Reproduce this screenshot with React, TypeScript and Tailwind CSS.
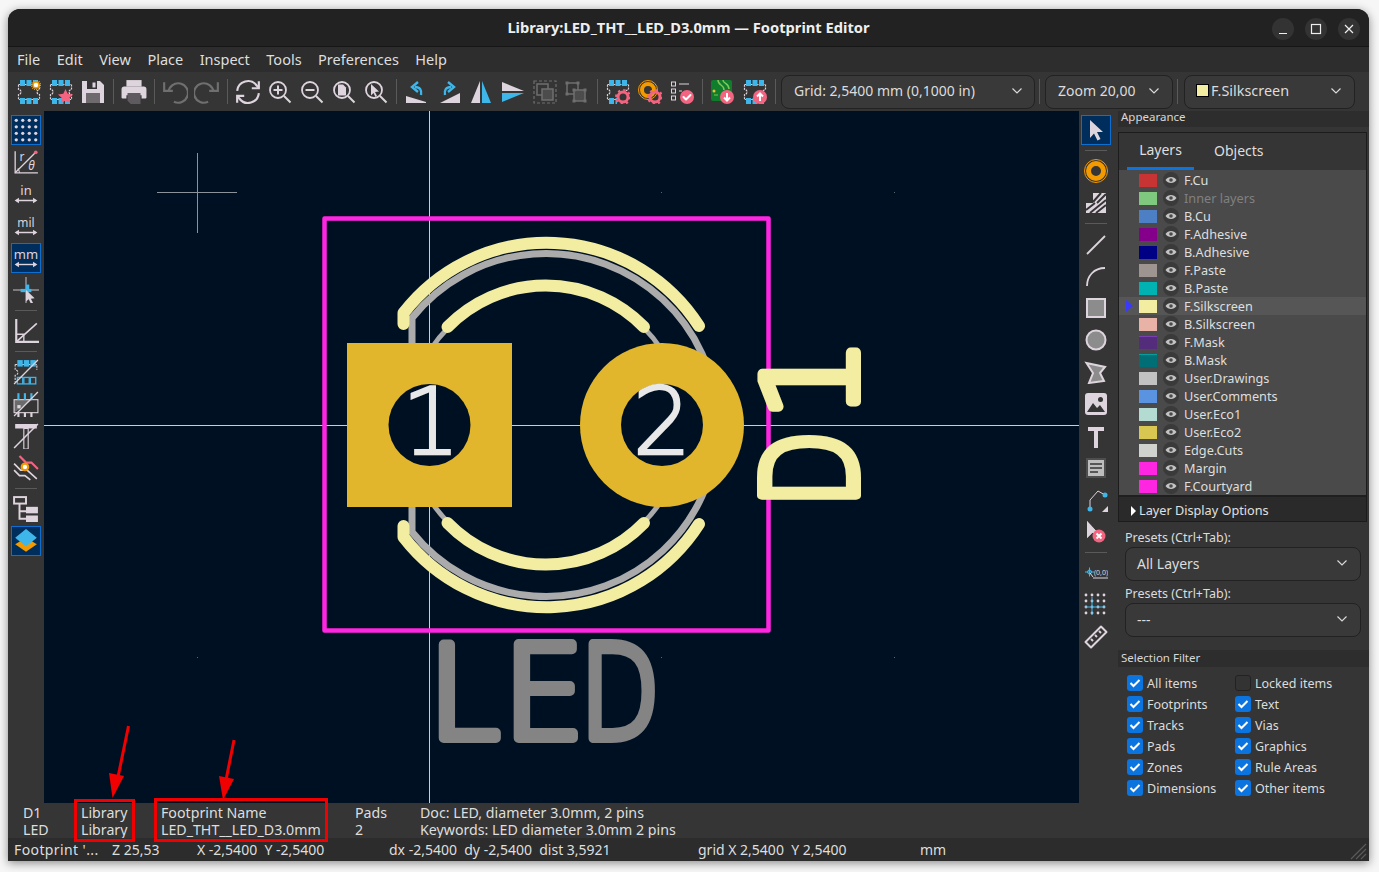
import type { ReactNode } from "react";

const L = "#ded4dd";
const B = "#3fb6ea";
const R = "#f2647f";
const O = "#f39a00";
const DIM = "#6f6f6f";

function Ic({ children, size = 24 }: { children: ReactNode; size?: number }) {
  return (
    <svg width={size} height={size} viewBox="0 0 24 24" fill="none" className="block">
      {children}
    </svg>
  );
}

function Btn({ children, active }: { children: ReactNode; active?: boolean }) {
  return (
    <div className="w-8 h-8 flex items-center justify-center shrink-0">
      <div
        className={`w-[30px] h-[30px] flex items-center justify-center ${
          active ? "bg-[#002e5c] border border-[#0f6fd0]" : ""
        }`}
      >
        {children}
      </div>
    </div>
  );
}

const HSep = () => <div className="w-[9px] h-8 flex items-center justify-center shrink-0"><div className="w-px h-[25px] bg-[#5a5a5a]" /></div>;
const VSep = () => <div className="h-[9px] w-8 flex items-center justify-center shrink-0"><div className="h-px w-[22px] bg-[#5a5a5a]" /></div>;

const FpBase = () => (
  <>
    <path d="M1.5 4.5h21v5a2.5 2.5 0 0 0 0 5v5h-21v-5a2.5 2.5 0 0 0 0-5z" stroke={L} strokeWidth="1.2" strokeDasharray="2 1" />
    {[3, 9.5, 16].map((x) => (
      <g key={x}>
        <rect x={x} y="0" width="5" height="6" fill={B} />
        <rect x={x} y="18" width="5" height="6" fill={B} />
      </g>
    ))}
  </>
);

const Gear = ({ cx = 17, cy = 17 }: { cx?: number; cy?: number }) => (
  <g>
    <circle cx={cx} cy={cy} r="5" fill="none" stroke={R} strokeWidth="3" />
    <circle cx={cx} cy={cy} r="7" fill="none" stroke={R} strokeWidth="2" strokeDasharray="2.4 3.1" />
  </g>
);

const Badge = ({ d }: { d: string }) => (
  <g>
    <circle cx="17" cy="17" r="7" fill={R} />
    <path d={d} stroke="#fff" strokeWidth="2" strokeLinecap="round" strokeLinejoin="round" />
  </g>
);

const Lens = ({ children }: { children?: ReactNode }) => (
  <>
    <circle cx="10" cy="10" r="8" stroke={L} strokeWidth="1.8" />
    <path d="M16 16l6.5 6.5" stroke={L} strokeWidth="2" />
    {children}
  </>
);

const Arrow = ({ color = L }: { color?: string }) => (
  <path d="M6 2l13 12h-6l3.5 7-3 1.5-3.5-7L6 20z" fill={color} />
);

const Slash = () => <path d="M1 23L23 1" stroke={L} strokeWidth="1.2" />;

const DoubleArrow = () => (
  <g stroke={L} strokeWidth="1.3" fill={L}>
    <path d="M3 18h18" />
    <path d="M1.5 18l4-2.5v5zM22.5 18l-4-2.5v5z" stroke="none" />
  </g>
);

const UnitIcon = ({ label }: { label: string }) => (
  <Ic size={26}>
    <text x="12" y="13" textAnchor="middle" fontSize={label === "mil" ? 11 : 12} fontFamily="'Noto Sans', sans-serif" fill={L}>
      {label}
    </text>
    <DoubleArrow />
  </Ic>
);

const topIcons: (ReactNode | "sep")[] = [
  <Ic><FpBase /><circle cx="19" cy="5" r="3" fill="#fff" stroke={O} strokeWidth="1.5" /><circle cx="19" cy="5" r="4.6" stroke={O} strokeWidth="1.2" strokeDasharray="1 1" /></Ic>,
  <Ic><FpBase /><path d="M16.5 9l2.2 4.8 5.3.6-3.9 3.6 1 5.2-4.6-2.6-4.6 2.6 1-5.2-3.9-3.6 5.3-.6z" fill={R} /></Ic>,
  <Ic><path d="M1 1h18l4 4v18H1z" fill={L} /><rect x="6" y="1" width="10" height="8" fill="#353535" /><rect x="11.5" y="2.5" width="3" height="5" fill={L} /><rect x="5" y="13" width="14" height="10" fill="#6e6a6e" /></Ic>,
  "sep",
  <Ic size={26}><rect x="5" y="1" width="14" height="6" fill={L} /><path d="M3 7h18a2.5 2.5 0 0 1 2.5 2.5V17a1 1 0 0 1-1 1H19v-3H5v3H1.500a1 1 0 0 1-1-1V9.500A2.500 2.500 0 0 1 3 7z" fill={L} /><path d="M6 13h12v10H9l-3-3z" fill="#5f5a5f" /></Ic>,
  "sep",
  <Ic size={26}><path d="M6 12A9 9 0 1 1 11 21" stroke={DIM} strokeWidth="2" /><path d="M2 3v8h8" stroke={DIM} strokeWidth="2" /></Ic>,
  <Ic size={26}><path d="M18 12A9 9 0 1 0 13 21" stroke={DIM} strokeWidth="2" /><path d="M22 3v8h-8" stroke={DIM} strokeWidth="2" /></Ic>,
  "sep",
  <Ic size={26}><path d="M2 11a10 10 0 0 1 18-5l2 2" stroke={L} strokeWidth="2" /><path d="M22 2v6.500h-6.500" stroke={L} strokeWidth="2" /><path d="M22 13a10 10 0 0 1-18 5l-2-2" stroke={L} strokeWidth="2" /><path d="M2 22v-6.500h6.500" stroke={L} strokeWidth="2" /></Ic>,
  <Ic><Lens><path d="M10 5.500v9M5.500 10h9" stroke={L} strokeWidth="2" /></Lens></Ic>,
  <Ic><Lens><path d="M5.500 10h9" stroke={L} strokeWidth="2" /></Lens></Ic>,
  <Ic><Lens><path d="M6 4.500h5l3 3v8H6z" fill={L} /></Lens></Ic>,
  <Ic><Lens><path d="M7 4l8 7.500-4 .5 2 4-1.500 1-2-4L7 15.500z" fill={L} /></Lens></Ic>,
  "sep",
  <Ic><path d="M1 16l20 6v1H1z" fill={L} /><path d="M16 15c1-5-1-8-6-8" stroke={B} strokeWidth="2.400" /><path d="M13 2L7 7l6 5" stroke={B} strokeWidth="2.400" /></Ic>,
  <Ic><path d="M23 13v10H3z" fill={L} /><path d="M8 15c-1-5 1-8 6-8" stroke={B} strokeWidth="2.400" /><path d="M11 2l6 5-6 5" stroke={B} strokeWidth="2.400" /></Ic>,
  <Ic><path d="M11 1v22H2z" fill={L} /><path d="M13 1v22h9z" fill={B} /></Ic>,
  <Ic><path d="M1 2l22 9H1z" fill={L} /><path d="M1 13h22L1 22z" fill={B} /></Ic>,
  <Ic><rect x="1" y="1" width="22" height="22" stroke={DIM} strokeWidth="1.200" strokeDasharray="3 2" /><rect x="4" y="4" width="11" height="11" stroke={DIM} strokeWidth="1.500" /><rect x="9" y="9" width="11" height="11" fill="#4c4c4c" stroke={DIM} strokeWidth="1.500" /></Ic>,
  <Ic><rect x="2" y="3" width="11" height="11" stroke={DIM} strokeWidth="1.500" /><rect x="9" y="10" width="11" height="11" fill="#4c4c4c" stroke={DIM} strokeWidth="1.500" />{[[2, 3], [13, 3], [2, 14], [9, 10], [20, 10], [9, 21], [20, 21]].map(([x, y]) => <rect key={`${x}-${y}`} x={x - 1.5} y={y - 1.5} width="3" height="3" fill={DIM} />)}</Ic>,
  "sep",
  <Ic><FpBase /><rect x="11" y="11" width="13" height="13" fill="#353535" /><Gear /></Ic>,
  <Ic><circle cx="10" cy="10" r="9.500" stroke={O} strokeWidth="1" /><circle cx="10" cy="10" r="6" stroke={O} strokeWidth="4" /><Gear /></Ic>,
  <Ic>{[2, 9, 16].map((y) => <rect key={y} x="1.500" y={y} width="4" height="4" stroke={L} strokeWidth="1" />)}<path d="M9 4h10M9 11h3" stroke={L} strokeWidth="1.200" /><Badge d="M13.500 17l2.500 2.500 4.500-4.500" /></Ic>,
  "sep",
  <Ic><rect x="0" y="0" width="21" height="21" rx="2" fill="#0f7d2c" /><path d="M7 0c0 6 6 4 6 10M12 0c0 4 6 3 6 9" stroke="#7fc65a" strokeWidth="1.500" /><circle cx="3" cy="11" r="1.500" fill="#e8c040" /><path d="M3 15h4" stroke="#7fc65a" /><circle cx="16" cy="17" r="7" fill={R} /><path d="M16 13v7M13 17.500l3 3 3-3" stroke="#fff" strokeWidth="2" /></Ic>,
  <Ic><FpBase /><circle cx="17" cy="17" r="7" fill={R} /><path d="M17 21v-7M14 16.500l3-3 3 3" stroke="#fff" strokeWidth="2" /></Ic>,
  "sep",
];

const Grid4 = () => (
  <Ic size={26}>
    {[3, 9, 15, 21].flatMap((x) => [3, 9, 15, 21].map((y) => <circle key={`${x}-${y}`} cx={x} cy={y} r="1.500" fill={L} />))}
  </Ic>
);

const leftIcons: (ReactNode | "sep")[] = [
  <Btn active><Grid4 /></Btn>,
  <Btn><Ic size={26}><path d="M2 2v20h21" stroke={L} strokeWidth="1.200" /><path d="M2 22L21 3" stroke={L} strokeWidth="1.200" /><circle cx="21" cy="3" r="1.700" fill={R} /><path d="M6 22a7 7 0 0 0-1.500-4" stroke={L} /><text x="6" y="11" fontSize="11" fontFamily="'Noto Sans', sans-serif" fill={L}>r</text><text x="14" y="19" fontSize="11" fontStyle="italic" fontFamily="'Noto Sans', sans-serif" fill={L}>θ</text></Ic></Btn>,
  <Btn><UnitIcon label="in" /></Btn>,
  <Btn><UnitIcon label="mil" /></Btn>,
  <Btn active><UnitIcon label="mm" /></Btn>,
  <Btn><Ic size={26}><path d="M12 0v24M0 12h24" stroke={L} strokeWidth="0.800" /><path d="M7 11h10v3H7z" fill={B} /><path d="M12 7h3v7h-3z" fill={B} /><path d="M12 12l8 7.500-3.500.5 2 4-2 .5-2-4-2.500 2z" fill={L} /></Ic></Btn>,
  "sep",
  <Btn><Ic size={26}><path d="M3 1v21h21" stroke={L} strokeWidth="2" /><path d="M3 22L22 5" stroke={L} strokeWidth="1.500" /><path d="M3 15h7v7" stroke={L} strokeWidth="1.200" /></Ic></Btn>,
  "sep",
  <Btn><Ic size={26}><path d="M2 5h20v5M2 5v5a2 2 0 0 1 0 5v6" stroke={L} strokeWidth="1" strokeDasharray="2 1" />{[4, 10, 16].map((x) => <g key={x}><rect x={x} y="1" width="5" height="6" fill={B} /><rect x={x} y="17" width="5" height="6" stroke={B} strokeWidth="1.200" /></g>)}<Slash /></Ic></Btn>,
  <Btn><Ic size={26}><path d="M1 8h17L1 20z" fill="#6b6b6b" /><rect x="4" y="13" width="3" height="3" fill={L} /><rect x="1" y="8" width="22" height="12" stroke={L} strokeWidth="1" />{[5, 11, 17].map((x) => <g key={x}><path d={`M${x} 2v6`} stroke={B} strokeWidth="2" /><path d={`M${x} 20v4`} stroke={L} strokeWidth="2" /></g>)}<Slash /></Ic></Btn>,
  <Btn><Ic size={26}><path d="M2 1h20v4H14v19h-4V5H2z" fill={L} /><path d="M10 5h4v19h-4z" fill="#353535" stroke={L} strokeWidth="1" /><path d="M1 23L23 1" stroke={L} strokeWidth="1.400" /></Ic></Btn>,
  <Btn><Ic size={26}><path d="M6 1l6 6h5l6 6" stroke={R} strokeWidth="2" /><path d="M1 8l6 6h6l9 8" stroke={L} strokeWidth="1.500" /><path d="M1 14l5 5h5l5 4" stroke={L} strokeWidth="1.500" /><circle cx="11" cy="11" r="3" fill="#fff" stroke={O} strokeWidth="2" /></Ic></Btn>,
  "sep",
  <Btn><Ic size={26}><rect x="1" y="1" width="11" height="6" fill="none" stroke={L} strokeWidth="1.800" /><path d="M6 7v14h6M6 14h6" stroke={L} strokeWidth="1.800" /><rect x="12" y="10" width="11" height="6" fill={L} /><rect x="12" y="18" width="11" height="6" fill={L} /></Ic></Btn>,
  <Btn active><Ic size={26}><path d="M12 9l10 6-10 7-10-7z" fill={O} /><path d="M12 1l10 8-10 8L2 9z" fill={B} /></Ic></Btn>,
];

const rightIcons: (ReactNode | "sep")[] = [
  <Btn active><Ic><Arrow /></Ic></Btn>,
  "sep",
  <Btn><Ic><circle cx="12" cy="12" r="11.500" stroke={O} strokeWidth="1" /><circle cx="12" cy="12" r="7.500" stroke={O} strokeWidth="5" /></Ic></Btn>,
  <Btn><Ic><path d="M2 12h7V2h13v20H2z" fill={L} /><path d="M2 19l9-7M6 22l16-13M12 22L22 14M9 11l8-9M13 12l9-9" stroke="#353535" strokeWidth="2" /></Ic></Btn>,
  "sep",
  <Btn><Ic><path d="M3 22L21 4" stroke={L} strokeWidth="1.800" /></Ic></Btn>,
  <Btn><Ic><path d="M3 22C3 12 10 4 21 4" stroke={L} strokeWidth="1.800" /></Ic></Btn>,
  <Btn><Ic><rect x="3" y="3" width="18" height="18" fill="#8c8c8c" stroke={L} strokeWidth="2" /></Ic></Btn>,
  <Btn><Ic><circle cx="12" cy="12" r="9.500" fill="#8c8c8c" stroke={L} strokeWidth="2" /></Ic></Btn>,
  <Btn><Ic><path d="M2.500 3L21 7l-5 6 4 8-15 2 4-10z" fill="#8c8c8c" stroke={L} strokeWidth="2" /></Ic></Btn>,
  <Btn><Ic><rect x="1" y="1" width="22" height="22" rx="3" fill={L} /><circle cx="16.500" cy="7.500" r="2.500" fill="#353535" /><path d="M3 20l6-9 4 5 3-3 5 7z" fill="#353535" /></Ic></Btn>,
  <Btn><Ic><path d="M4 3h16v4h-6v18h-4V7H4z" fill={L} /></Ic></Btn>,
  <Btn><Ic><rect x="2" y="2" width="20" height="20" fill="#4e4e4e" /><rect x="4" y="4" width="16" height="16" fill="#bdbdbd" /><path d="M6 8h12M6 12h12M6 16h8" stroke="#353535" strokeWidth="1.500" /></Ic></Btn>,
  <Btn><Ic><path d="M21 7L14 3 6 12v9" stroke={L} strokeWidth="1" /><circle cx="21" cy="7" r="2.500" fill={B} /><circle cx="6" cy="21" r="2.500" fill={B} /><path d="M24 24v-6l-6 6z" fill={L} /></Ic></Btn>,
  <Btn><Ic><path d="M3 1l11 12H8l-5 5z" fill={L} /><path d="M3 1v17l5-5 6 0z" fill={L} /><circle cx="15" cy="16" r="6.500" fill={R} /><path d="M12.500 13.500l5 5m0-5l-5 5" stroke="#fff" strokeWidth="2" /></Ic></Btn>,
  "sep",
  <Btn><Ic><path d="M1 11h9M5.500 6.500v9" stroke={B} strokeWidth="1" /><circle cx="5.500" cy="11" r="2" stroke={B} strokeWidth="1" /><path d="M6 12l3 4" stroke={L} strokeWidth="1" /><text x="10" y="14" fontSize="7" fontFamily="'Noto Sans', sans-serif" fill={L}>(0,0)</text><path d="M9 17h15" stroke={L} strokeWidth="1" /></Ic></Btn>,
  <Btn><Ic>{[2, 8, 14, 20].flatMap((x) => [2, 8, 14, 20].map((y) => <circle key={`${x}-${y}`} cx={x} cy={y} r="1.400" fill={L} />))}<path d="M1 14h20M8 4v18" stroke={B} strokeWidth="1" /></Ic></Btn>,
  <Btn><Ic><path d="M1.500 17L17 1.500l5.500 5.500L7 22.500z" stroke={L} strokeWidth="2" strokeLinejoin="round" /><path d="M7 14l2 2M11 10l2 2M15 6l2 2" stroke={L} strokeWidth="2" /></Ic></Btn>,
];

const layers = [
  ["F.Cu", "bg-[#c83434]"],
  ["Inner layers", "bg-[#7fc97f]"],
  ["B.Cu", "bg-[#4d7fc4]"],
  ["F.Adhesive", "bg-[#84008a]"],
  ["B.Adhesive", "bg-[#000084]"],
  ["F.Paste", "bg-[#9f9590]"],
  ["B.Paste", "bg-[#00b2b2]"],
  ["F.Silkscreen", "bg-[#f2eda1]"],
  ["B.Silkscreen", "bg-[#e8b2a7]"],
  ["F.Mask", "bg-[#532c7c] border-t border-[#7a3fb0]"],
  ["B.Mask", "bg-[#006f75] border-t border-[#00a0a0]"],
  ["User.Drawings", "bg-[#c2c2c2]"],
  ["User.Comments", "bg-[#5a94e0]"],
  ["User.Eco1", "bg-[#b4dbd2]"],
  ["User.Eco2", "bg-[#d8c852]"],
  ["Edge.Cuts", "bg-[#d0d2cd]"],
  ["Margin", "bg-[#ff26e2]"],
  ["F.Courtyard", "bg-[#ff26e2]"],
];

const filters = [
  ["All items", "Locked items"],
  ["Footprints", "Text"],
  ["Tracks", "Vias"],
  ["Pads", "Graphics"],
  ["Zones", "Rule Areas"],
  ["Dimensions", "Other items"],
];

const Chevron = () => (
  <svg width="12" height="8" viewBox="0 0 12 8" fill="none">
    <path d="M1.500 1.500L6 6l4.500-4.500" stroke="#d8d8d8" strokeWidth="1.200" />
  </svg>
);

function Combo({ className, children }: { className: string; children: ReactNode }) {
  return (
    <div className={`flex items-center justify-between rounded-lg border border-[#222] bg-[#393939] pb-[2px] text-[14px] text-[#dcdcdc] ${className}`}>
      {children}
      <Chevron />
    </div>
  );
}

function Check({ label, checked }: { label: string; checked: boolean }) {
  return (
    <div className="flex items-center gap-1 h-[21px]">
      <div className={`w-4 h-4 rounded-[3px] flex items-center justify-center ${checked ? "bg-[#0c74df]" : "bg-[#333] border border-[#222]"}`}>
        {checked && (
          <svg width="12" height="10" viewBox="0 0 12 10" fill="none">
            <path d="M1.500 5l3 3 6-6" stroke="#fff" strokeWidth="2" />
          </svg>
        )}
      </div>
      <span className="text-[12.5px] pt-[4px] text-[#dcdcdc]">{label}</span>
    </div>
  );
}

function Eye() {
  return (
    <div className="w-4 h-4 rounded-full bg-[#3a3a3a] flex items-center justify-center">
      <svg width="12" height="8" viewBox="0 0 12 8" fill="none">
        <path d="M0.500 4C3 0 9 0 11.500 4 9 8 3 8 0.500 4z" fill="#c4c4c4" />
        <circle cx="6" cy="4" r="1.800" fill="#4a4a4a" />
      </svg>
    </div>
  );
}

function Board() {
  const silk = "#f2eda1";
  const fab = "#ababab";
  const font = "'DejaVu Sans', sans-serif";
  const ledProps = {
    fontSize: 129,
    fontWeight: 200,
    fontFamily: font,
    fill: "#848484",
    stroke: "#848484",
    strokeWidth: 10,
    strokeLinejoin: "round" as const,
  };
  const silkProps = { ...ledProps, fill: silk, stroke: silk };
  return (
    <svg viewBox="44 111 1035 692" className="block w-full h-full">
      {[[661, 192], [894, 192], [197, 657], [661, 657], [894, 657], [894, 425]].map(([x, y]) => (
        <rect key={`${x}-${y}`} x={x} y={y} width="1" height="1" fill="#5a6670" />
      ))}
      <path d="M157 192.500h80M197.500 153v80" stroke="#8b929a" strokeWidth="1" />
      <path d="M429.500 111v692M44 425.500h1035" stroke="#c9ced3" strokeWidth="1" />

      <text x="428" y="738" {...ledProps}>L</text>
      <text x="503" y="738" {...ledProps}>E</text>
      <text transform="translate(580 738) scale(0.8 1)" {...ledProps}>D</text>

      <circle cx="546" cy="425" r="138" stroke={fab} strokeWidth="5" fill="none" />
      <path d="M412 345V318A171.500 171.500 0 1 1 412 532V505" stroke={fab} strokeWidth="7" fill="none" />

      <path d="M403.500 324V313A181 181 0 0 1 699 326" stroke={silk} strokeWidth="12" strokeLinecap="round" strokeLinejoin="round" fill="none" />
      <path d="M403.500 526V537A181 181 0 0 0 699 524" stroke={silk} strokeWidth="12" strokeLinecap="round" strokeLinejoin="round" fill="none" />
      <path d="M447.500 327A137 137 0 0 1 644 327" stroke={silk} strokeWidth="12" strokeLinecap="round" fill="none" />
      <path d="M447.500 523A137 137 0 0 0 644 523" stroke={silk} strokeWidth="12" strokeLinecap="round" fill="none" />

      <rect x="324.500" y="218.500" width="444" height="412" stroke="#ff26e2" strokeWidth="4.500" strokeLinejoin="round" fill="none" />

      <rect x="347" y="343" width="165" height="164" fill="#e1b52c" />
      <circle cx="662" cy="425" r="82" fill="#e1b52c" />
      <circle cx="429.500" cy="425" r="41" fill="#001023" />
      <circle cx="662" cy="425" r="41" fill="#001023" />

      <text x="431" y="454" textAnchor="middle" fontSize="92" fontWeight="200" fontFamily={font} fill="#e8e8e8" stroke="#e8e8e8" strokeWidth="2.500">1</text>
      <text x="662" y="454" textAnchor="middle" fontSize="92" fontWeight="200" fontFamily={font} fill="#e8e8e8" stroke="#e8e8e8" strokeWidth="2.500">2</text>

      <text transform="translate(856 508) rotate(-90) scale(0.78 1)" {...silkProps}>D</text>
      <text transform="translate(856 421) rotate(-90) scale(1.02 1)" {...silkProps}>1</text>
    </svg>
  );
}

export default function App() {
  return (
    <div className="w-[1379px] h-[872px] bg-[#f6f6f6] pl-2 pt-[9px] overflow-hidden relative font-['Noto_Sans','Liberation_Sans',sans-serif]">
      <div className="w-[1361px] h-[852px] flex flex-col rounded-t-xl overflow-hidden shadow-[0_2px_10px_rgba(0,0,0,0.45)] bg-[#353535]">
        {/* title bar */}
        <div className="h-[38px] shrink-0 bg-[#222] border-b border-[#161616] relative flex items-center justify-center">
          <span className="text-[14.7px] font-bold text-[#efefef]">Library:LED_THT__LED_D3.0mm — Footprint Editor</span>
          <div className="absolute right-[9px] top-[9px] flex gap-[11px]">
            {["min", "max", "close"].map((k) => (
              <div key={k} className="w-[22px] h-[22px] rounded-full bg-[#333] flex items-center justify-center">
                <svg width="12" height="12" viewBox="0 0 12 12" fill="none">
                  {k === "min" && <path d="M2 10.500h8" stroke="#eee" strokeWidth="1.200" />}
                  {k === "max" && <rect x="1.500" y="1.500" width="9" height="9" stroke="#eee" strokeWidth="1.200" />}
                  {k === "close" && <path d="M2 2l8 8m0-8l-8 8" stroke="#eee" strokeWidth="1.200" />}
                </svg>
              </div>
            ))}
          </div>
        </div>

        {/* menu */}
        <div className="h-[25px] shrink-0 bg-[#2d2d2d] flex items-center pl-[9px] gap-[16.5px] text-[14.5px] text-[#dedede]">
          {["File", "Edit", "View", "Place", "Inspect", "Tools", "Preferences", "Help"].map((m) => (
            <span key={m}>{m}</span>
          ))}
        </div>

        {/* toolbar */}
        <div className="h-[39px] shrink-0 bg-[#353535] flex items-center pl-[5px]">
          {topIcons.map((ic, i) => (ic === "sep" ? <HSep key={i} /> : <Btn key={i}>{ic}</Btn>))}
          <Combo className="w-[254px] h-[34px] ml-px pl-3 pr-[11px]">Grid: 2,5400 mm (0,1000 in)</Combo>
          <HSep />
          <Combo className="w-[128px] h-[34px] ml-px pl-3 pr-3">Zoom 20,00</Combo>
          <HSep />
          <Combo className="w-[171px] h-[34px] ml-[2px] pl-[11px] pr-3">
            <span className="flex items-center gap-[2px] text-[14.4px]">
              <span className="w-[13px] h-[13px] bg-[#f2eda1] border border-black" />
              F.Silkscreen
            </span>
          </Combo>
        </div>

        {/* body */}
        <div className="flex-1 flex min-h-0">
          <div className="w-[1110px] flex flex-col">
            <div className="h-[692px] flex">
              <div className="w-9 shrink-0 flex flex-col items-center pt-[3px]">
                {leftIcons.map((ic, i) => (ic === "sep" ? <VSep key={i} /> : <div key={i}>{ic}</div>))}
              </div>
              <div className="w-[1035px] shrink-0 bg-[#001023]">
                <Board />
              </div>
              <div className="w-[39px] shrink-0 flex flex-col items-center pt-[3px] pr-[6px]">
                {rightIcons.map((ic, i) => (ic === "sep" ? <VSep key={i} /> : <div key={i}>{ic}</div>))}
              </div>
            </div>
            <div className="h-[35px] flex pt-px text-[14.2px] leading-[17px] text-[#dedede]">
              <div className="ml-[15px] w-[58px]"><div>D1</div><div>LED</div></div>
              <div className="w-[80px]"><div>Library</div><div>Library</div></div>
              <div className="w-[194px]"><div>Footprint Name</div><div>LED_THT__LED_D3.0mm</div></div>
              <div className="w-[65px]"><div>Pads</div><div>2</div></div>
              <div><div>Doc: LED, diameter 3.0mm, 2 pins</div><div>Keywords: LED diameter 3.0mm 2 pins</div></div>
            </div>
          </div>

          {/* right panel */}
          <div className="w-[251px] flex flex-col">
            <div className="h-4 bg-[#2d2d2d] pl-[3px] text-[11.5px] leading-[12px] text-[#d8d8d8]">Appearance</div>
            <div className="mt-[5px] w-[249px] h-[390px] border border-[#1c1c1c] flex flex-col">
              <div className="h-[37px] flex text-[14px] text-[#dedede] pl-2 gap-[17px] shrink-0">
                <div className="w-[67px] h-full flex items-center justify-center pb-[2px] border-b-[3px] border-[#0c74df]">Layers</div>
                <div className="h-full flex items-center pb-[2px] px-[3px]">Objects</div>
              </div>
              <div className="bg-[#4a4a4a] h-[325px] shrink-0 pt-px">
                {layers.map(([name, swatch]) => (
                  <div key={name} className={`h-[18px] flex items-center relative pl-5 ${name === "F.Silkscreen" ? "bg-[#565656]" : ""}`}>
                    {name === "F.Silkscreen" && (
                      <div className="absolute left-[7px] top-[3px] w-0 h-0 border-y-[6px] border-y-transparent border-l-[7px] border-l-[#3a3aff]" />
                    )}
                    <div className={`w-[18px] h-[13px] ${swatch}`} />
                    <div className="ml-[6px]"><Eye /></div>
                    <span className={`ml-[5px] pt-[2px] text-[12.7px] ${name === "Inner layers" ? "text-[#808080]" : "text-[#dedede]"}`}>{name}</span>
                  </div>
                ))}
              </div>
              <div className="flex-1 bg-[#2a2a2a] border-t-2 border-[#1f1f1f] flex items-center pl-3 pt-[3px] text-[12.7px] text-[#e0e0e0]">
                <div className="w-0 h-0 border-y-[5px] border-y-transparent border-l-[5px] border-l-white mr-[3px]" />
                Layer Display Options
              </div>
            </div>
            <div className="pl-[7px] pr-2 mt-[6px]">
              <div className="text-[12.5px] h-[18px] leading-[20px] text-[#dcdcdc]">Presets (Ctrl+Tab):</div>
              <Combo className="h-[34px] w-[236px] mt-px pl-[11px] pr-3">All Layers</Combo>
              <div className="text-[12.5px] h-[18px] leading-[20px] text-[#dcdcdc] mt-[3px]">Presets (Ctrl+Tab):</div>
              <Combo className="h-[34px] w-[236px] mt-[1px] pl-[11px] pr-3">---</Combo>
            </div>
            <div className="h-[17px] mt-[13px] bg-[#2d2d2d] pl-[3px] text-[11.5px] leading-[15px] text-[#d8d8d8]">Selection Filter</div>
            <div className="grid grid-cols-[108px_1fr] pl-[9px] mt-[5px]">
              {filters.flatMap(([a, b]) => [
                <Check key={a} label={a} checked />,
                <Check key={b} label={b} checked={b !== "Locked items"} />,
              ])}
            </div>
          </div>
        </div>

        {/* status bar */}
        <div className="h-[23px] shrink-0 bg-[#2c2c2c] flex items-center pl-[6px] text-[14px] text-[#dedede] relative">
          <span className="w-[98px] tracking-[0.4px]">Footprint '...</span>
          <span className="w-[85px]">Z 25,53</span>
          <span className="w-[192px] whitespace-pre">X -2,5400  Y -2,5400</span>
          <span className="w-[309px] whitespace-pre">dx -2,5400  dy -2,5400  dist 3,5921</span>
          <span className="w-[222px] whitespace-pre">grid X 2,5400  Y 2,5400</span>
          <span>mm</span>
          <svg width="18" height="18" viewBox="0 0 18 18" className="absolute right-[2px] bottom-[1px]" fill="none">
            <path d="M2 17L17 2M7 17L17 7M12 17l5-5" stroke="#5a5a5a" strokeWidth="1.200" />
          </svg>
        </div>
      </div>

      {/* red annotations drawn over the screenshot */}
      <div className="absolute left-[74px] top-[799px] w-[61px] h-[43px] border-[3px] border-[#f00000]" />
      <div className="absolute left-[154px] top-[798px] w-[174px] h-[44px] border-[3px] border-[#f00000]" />
      <svg className="absolute left-0 top-0 pointer-events-none" width="1379" height="872" fill="none">
        <path d="M128.500 726L118 777" stroke="#f00000" strokeWidth="3" />
        <path d="M112.500 798L109 773l15 3z" fill="#f00000" />
        <path d="M234 740L226 780" stroke="#f00000" strokeWidth="3" />
        <path d="M223 800L219 776l15 3z" fill="#f00000" />
      </svg>
    </div>
  );
}
